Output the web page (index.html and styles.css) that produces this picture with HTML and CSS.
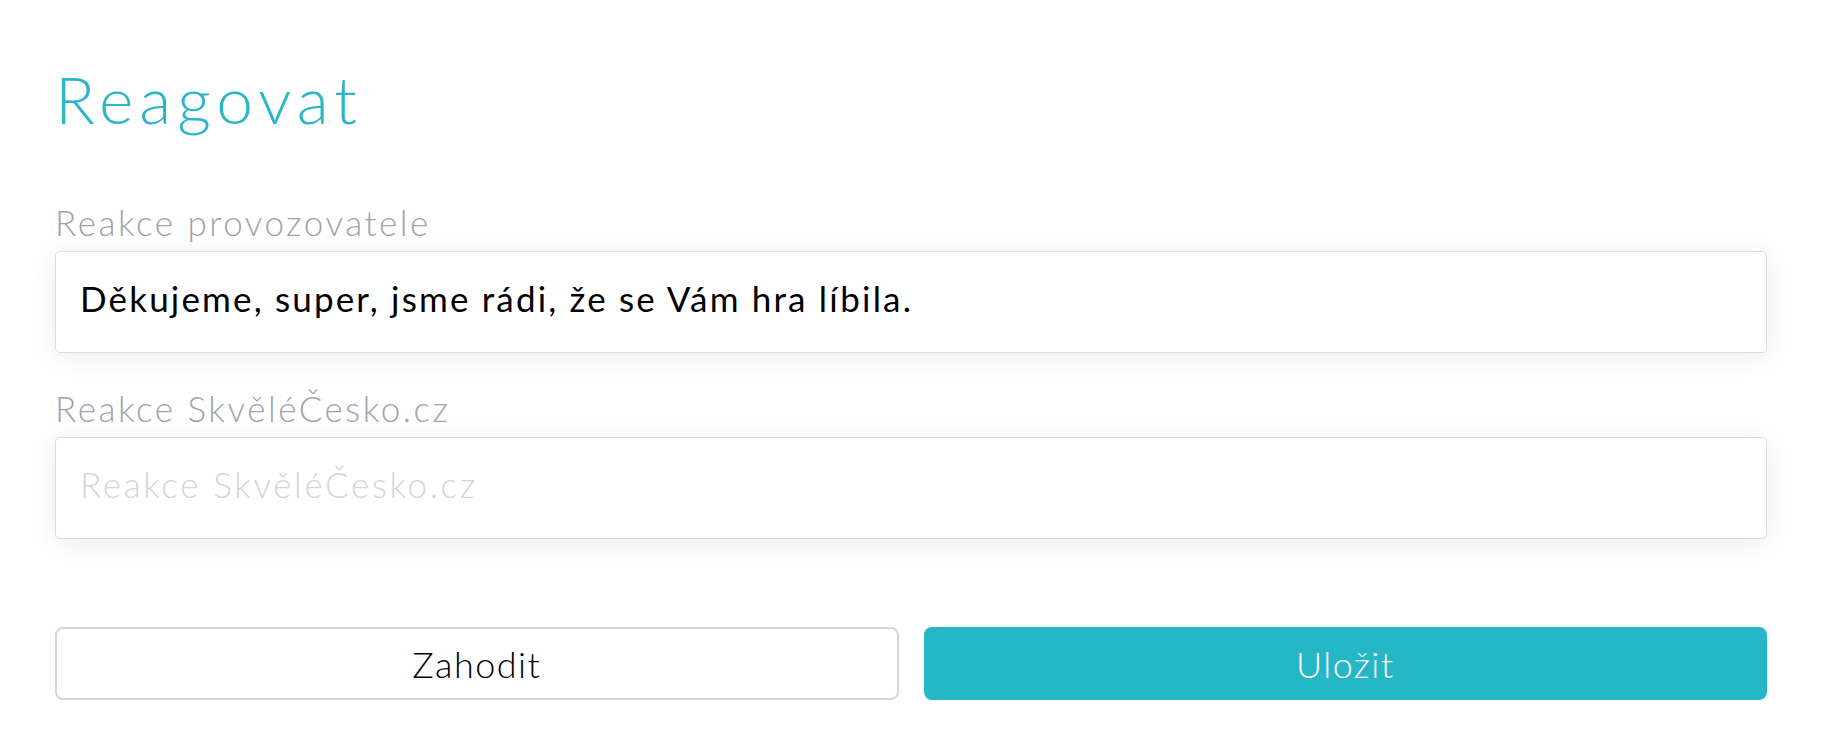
FILE: index.html
```html
<!DOCTYPE html>
<html lang="cs">
<head>
    <meta charset="UTF-8">
    <meta name="viewport" content="width=device-width, initial-scale=1.0">
    <title>Reagovat</title>
    <link rel="stylesheet" href="styles.css">
</head>
<body>
    <div class="page">
        <h1 class="title">Reagovat</h1>

        <form class="reply-form">
            <div class="field">
                <label for="operator">Reakce provozovatele</label>
                <input type="text" id="operator" name="operator" value="Děkujeme, super, jsme rádi, že se Vám hra líbila." autofocus>
            </div>
            <div class="field">
                <label for="admin">Reakce SkvěléČesko.cz</label>
                <input type="text" id="admin" name="admin" placeholder="Reakce SkvěléČesko.cz">
            </div>

            <div class="actions">
                <button type="button" class="btn btn-outline">Zahodit</button>
                <button type="submit" class="btn btn-primary">Uložit</button>
            </div>
        </form>
    </div>
</body>
</html>
```
FILE: styles.css
```css
body {
    margin: 0;
    padding: 0;
    background-color: #fff;
    font-family: 'Lato', 'Open Sans', sans-serif;
    color: #000;
}

.page {
    padding: 59px 57px 0 55px;
}

.title {
    margin: 0;
    font-size: 66px;
    font-weight: 300;
    line-height: 1.2;
    letter-spacing: 0.09em;
    color: #2bb6c5;
}

.reply-form {
    margin-top: 63px;
}

.field {
    display: flex;
    flex-direction: column;
    gap: 8px;
    margin-bottom: 34px;
}

.field label {
    font-size: 35px;
    font-weight: 300;
    line-height: 42px;
    letter-spacing: 0.072em;
    color: #9ea3ac;
}

.field input {
    box-sizing: border-box;
    height: 102px;
    padding: 0 24px 9px;
    font-family: inherit;
    font-size: 35px;
    font-weight: 400;
    letter-spacing: 0.062em;
    color: #000;
    background: #fff;
    border: 1px solid #dcdde2;
    border-radius: 5px;
    box-shadow: 0 4px 26px rgba(0, 0, 0, 0.08);
    outline: none;
}

.field input::placeholder {
    color: #d3d5da;
    font-weight: 300;
    letter-spacing: 0.075em;
}

.actions {
    display: grid;
    grid-template-columns: 1fr 1fr;
    gap: 25px;
    margin-top: 88px;
}

.btn {
    height: 73px;
    font-family: inherit;
    font-size: 36px;
    font-weight: 300;
    letter-spacing: 0.04em;
    border-radius: 8px;
    cursor: pointer;
}

.btn-outline {
    background: #fff;
    color: #000;
    border: 2px solid #cfd8e2;
}

.btn-primary {
    background: #25b7c6;
    color: #fff;
    border: none;
}
```
